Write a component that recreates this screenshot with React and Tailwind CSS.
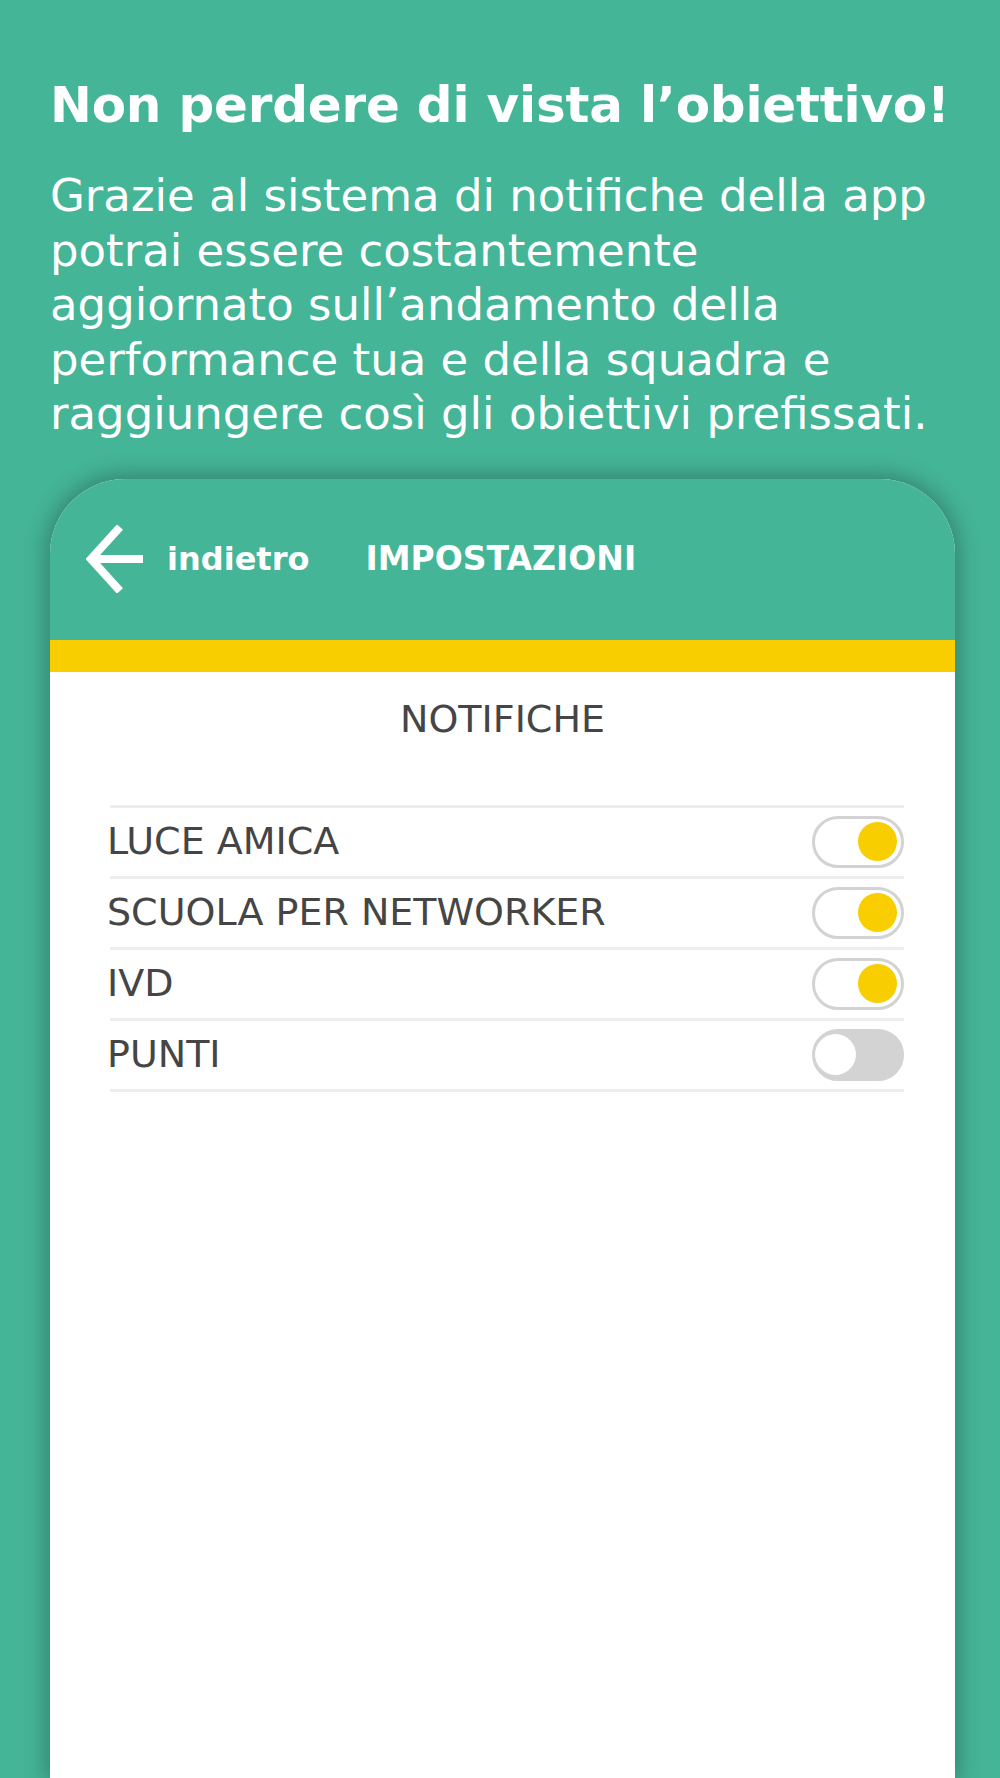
import React, { useState } from "react";

const rowsInit = [
  { id: "luce", label: "LUCE AMICA", on: true },
  { id: "scuola", label: "SCUOLA PER NETWORKER", on: true },
  { id: "ivd", label: "IVD", on: true },
  { id: "punti", label: "PUNTI", on: false },
];

const Toggle = ({ on, onClick }) => (
  <button
    onClick={onClick}
    className={`flex h-[52px] w-[92px] shrink-0 items-center rounded-full border-[3px] border-[#d3d3d3] ${
      on ? "justify-end bg-white pr-[3px]" : "justify-start bg-[#d3d3d3]"
    }`}
  >
    <span
      className={`block h-[41px] w-[41px] rounded-full border border-white ${
        on ? "bg-[#f9ce00]" : "bg-white"
      }`}
    />
  </button>
);

const BackArrow = () => (
  <svg width="58" height="68" viewBox="0 0 58 68" fill="none">
    <path d="M6 34 H57" stroke="white" strokeWidth="8" />
    <path d="M34 2 L5 34 L34 66" stroke="white" strokeWidth="8" strokeLinejoin="miter" />
  </svg>
);

const App = () => {
  const [rows, setRows] = useState(rowsInit);

  const flip = (id) =>
    setRows((r) => r.map((x) => (x.id === id ? { ...x, on: !x.on } : x)));

  return (
    <div className="flex h-[1778px] w-full flex-col overflow-hidden bg-[#45b597] font-['DejaVu_Sans',sans-serif] text-white">
      {/* Intro */}
      <div className="px-[50px] pt-[76px]">
        <h1 className="whitespace-nowrap text-[50px] font-bold leading-[58px] tracking-[-0.2px]">
          Non perdere di vista l’obiettivo!
        </h1>
        <p className="mt-[35px] text-[45px] leading-[54.5px]">
          <span className="block whitespace-nowrap">Grazie al sistema di notifiche della app</span>
          <span className="block whitespace-nowrap">potrai essere costantemente</span>
          <span className="block whitespace-nowrap">aggiornato sull’andamento della</span>
          <span className="block whitespace-nowrap">performance tua e della squadra e</span>
          <span className="block whitespace-nowrap">raggiungere così gli obiettivi prefissati.</span>
        </p>
      </div>

      {/* Phone card */}
      <div className="ml-[50px] mt-[37px] flex w-[905px] flex-1 flex-col overflow-hidden rounded-t-[75px] bg-white shadow-[0_0_22px_4px_rgba(0,0,0,0.28)]">
        <div className="flex h-[161px] items-center bg-[#45b597] pl-[36px]">
          <BackArrow />
          <span className="ml-[23px] text-[32px] font-bold">indietro</span>
          <span className="ml-[56px] text-[33px] font-bold">IMPOSTAZIONI</span>
        </div>
        <div className="h-[32px] bg-[#f9ce00]" />

        <h2 className="mt-[25px] text-center text-[38px] leading-[44px] text-[#454545]">NOTIFICHE</h2>

        <ul className="ml-[60px] mr-[51px] mt-[64px] border-t-[3px] border-[#ededed] text-[#454545]">
          {rows.map((r) => (
            <li
              key={r.id}
              className="flex h-[71px] items-center justify-between border-b-[3px] border-[#ededed]"
            >
              <span className="-ml-[3px] text-[38px]">{r.label}</span>
              <Toggle on={r.on} onClick={() => flip(r.id)} />
            </li>
          ))}
        </ul>
      </div>
    </div>
  );
};

export default App;
